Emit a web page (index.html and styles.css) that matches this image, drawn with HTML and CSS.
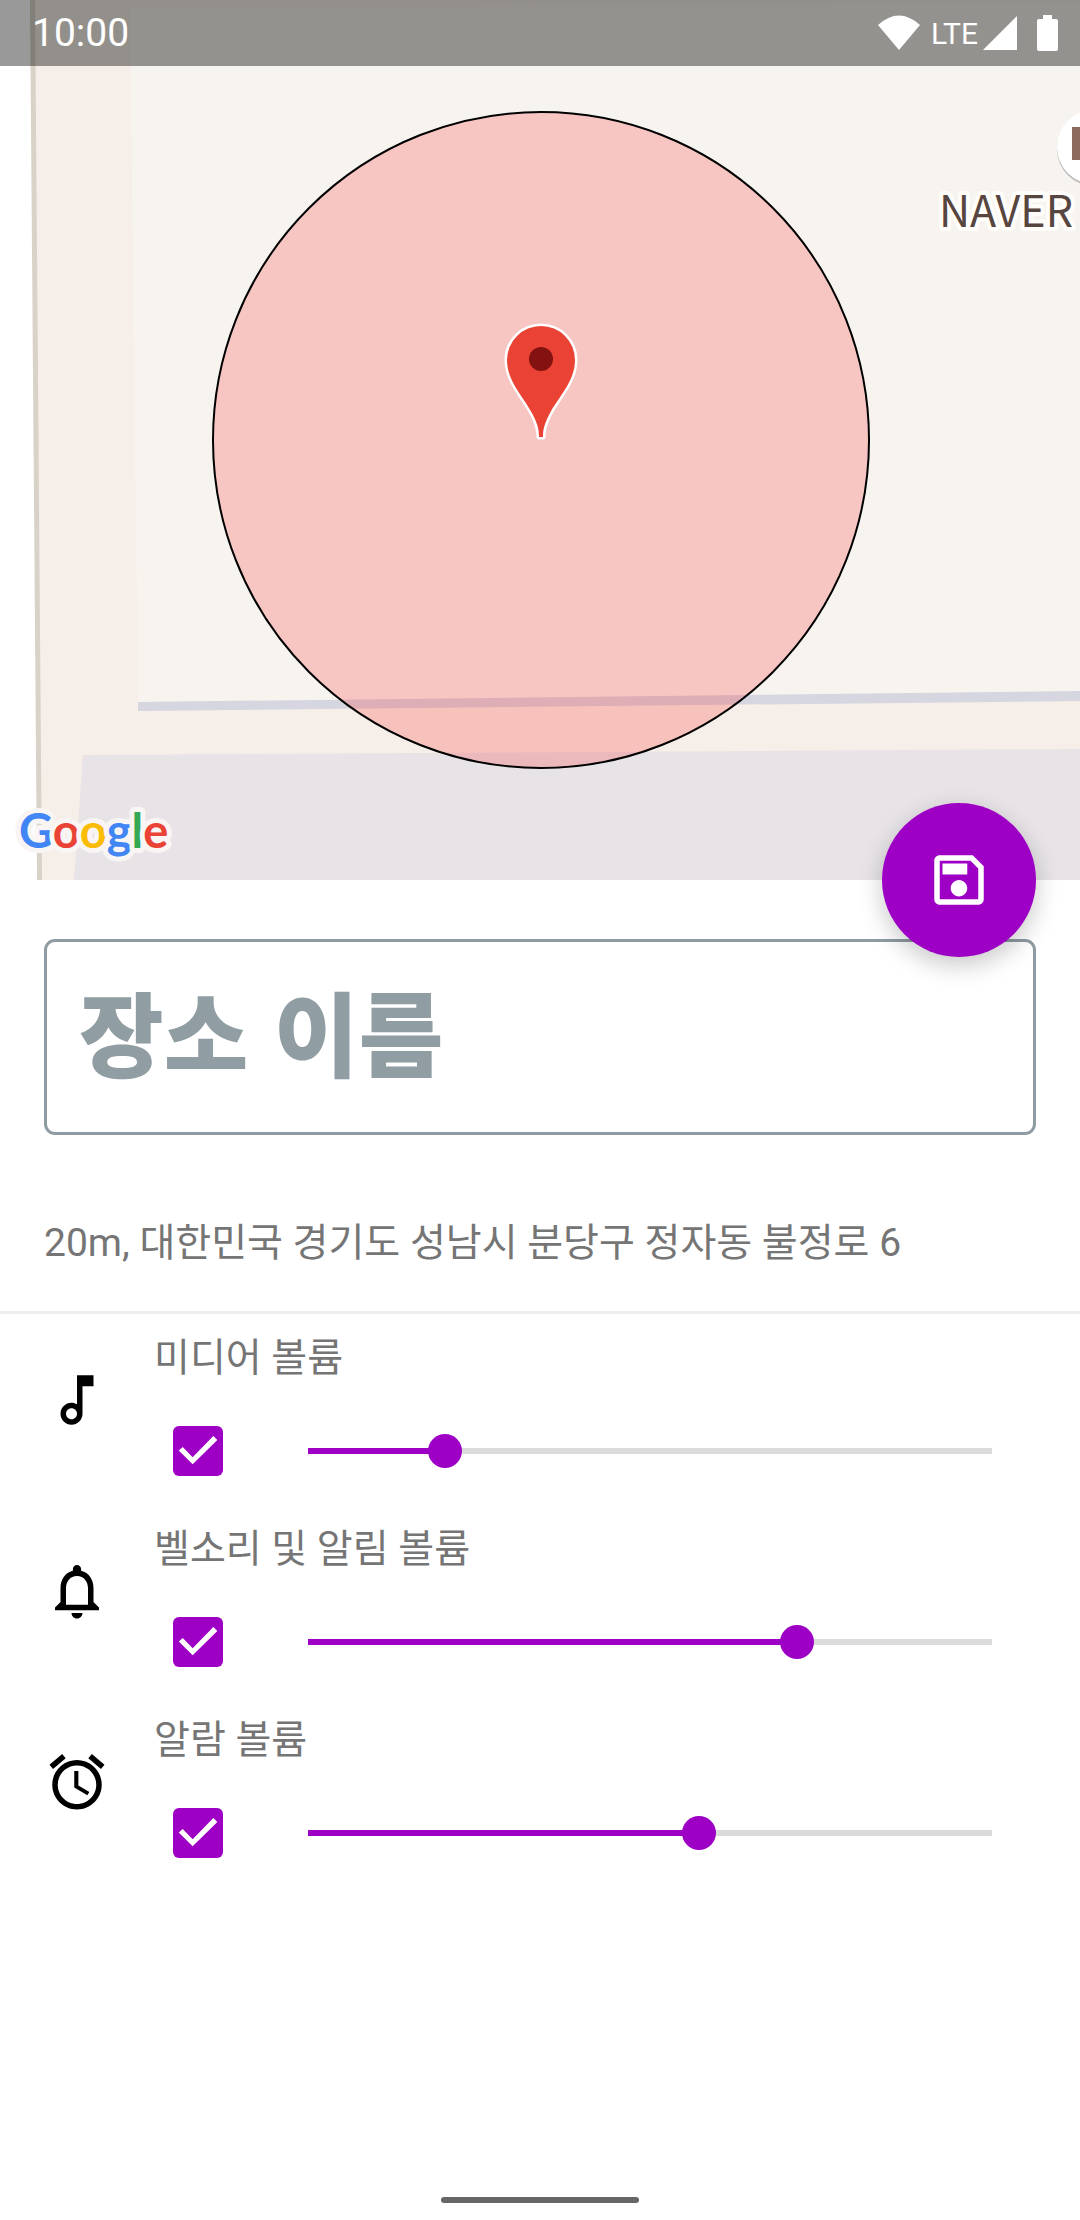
FILE: index.html
```html
<!DOCTYPE html>
<html lang="ko">
<head>
<meta charset="utf-8">
<meta name="viewport" content="width=device-width, initial-scale=1">
<title>장소 이름</title>
<link rel="stylesheet" href="styles.css">
</head>
<body>
<div class="screen">
  <header class="map">
    <svg class="map-canvas" viewBox="0 0 1080 880" preserveAspectRatio="xMidYMid slice" role="img" aria-label="지도">
      <rect width="1080" height="880" fill="#fff"/>
      <path d="M33 0H1080V880H40Z" fill="#f6eee8"/>
      <path d="M30 0H35L42 880H37Z" fill="#d9d2c8"/>
      <path d="M130 9L1080 3V692L138 702Z" fill="#f7f4ef"/>
      <path d="M138 702L1080 691V701L138 711Z" fill="#d5d6df"/>
      <path d="M83 755L1080 749V880H74Z" fill="#e7e3e6"/>
      <circle cx="1094" cy="149" r="37" fill="#b9b9b9"/>
      <circle cx="1094" cy="147" r="37" fill="#fff"/>
      <rect x="1072" y="127" width="20" height="33" fill="#8d6a5e"/>
      <text class="poi" x="939" y="227">NAVER</text>
      <circle cx="541" cy="440" r="328" fill="#ff1111" fill-opacity=".2" stroke="#000" stroke-width="2"/>
      <path d="M507 360a34 34 0 0 1 68 0C575 382 558 397 549 415C544 425 543 430 543 437H539C539 430 538 425 533 415C524 397 507 382 507 360Z" fill="#ea4335" stroke="#fff" stroke-width="5" stroke-linejoin="round" paint-order="stroke"/>
      <circle cx="541" cy="359" r="12" fill="#831210"/>
      <text class="brand" x="19" y="848"><tspan class="blue">G</tspan><tspan class="red">o</tspan><tspan class="yellow">o</tspan><tspan class="blue">g</tspan><tspan class="green">l</tspan><tspan class="red">e</tspan></text>
    </svg>
    <div class="status">
      <time class="clock">10:00</time>
      <svg class="wifi" viewBox="0 0 42 36"><path d="M0 10Q21 -9 42 10L21 35Z" fill="#fff"/></svg>
      <span class="network">LTE</span>
      <svg class="signal" viewBox="0 0 34 36"><path d="M34 1V35H0Z" fill="#fff"/></svg>
      <svg class="battery" viewBox="0 0 22 36"><path d="M6 0H15V4H19Q21 4 21 6V34Q21 36 19 36H2Q0 36 0 34V6Q0 4 2 4H6Z" fill="#fff"/></svg>
    </div>
    <button class="save" type="button" aria-label="저장">
      <svg class="icon" viewBox="0 0 24 24"><path fill="#fff" d="M17 3H5c-1.11 0-2 .9-2 2v14c0 1.1.89 2 2 2h14c1.1 0 2-.9 2-2V7l-4-4zm2 16H5V5h11.17L19 7.83V19zm-7-7c-1.66 0-3 1.34-3 3s1.34 3 3 3 3-1.34 3-3-1.34-3-3-3zM6 6h9v4H6V6z"/></svg>
    </button>
  </header>

  <main>
    <div class="place">
      <input class="name" type="text" placeholder="장소 이름" aria-label="장소 이름">
      <p class="address">20m, 대한민국 경기도 성남시 분당구 정자동 불정로 6</p>
    </div>

    <section class="volume">
      <svg class="icon" viewBox="0 0 24 24"><path d="M12 3l.01 10.55c-.59-.34-1.27-.55-2-.55C7.79 13 6 14.79 6 17s1.79 4 4.01 4S14 19.21 14 17V7h4V3h-6zm-1.99 16c-1.1 0-2-.9-2-2s.9-2 2-2 2 .9 2 2-.9 2-2 2z"/></svg>
      <div class="body">
        <label class="label" for="media">미디어 볼륨</label>
        <div class="controls">
          <input class="check" type="checkbox" checked aria-label="미디어 볼륨 사용">
          <input class="slider" id="media" type="range" min="0" max="15" value="3" style="--fill: 3 / 15">
        </div>
      </div>
    </section>

    <section class="volume">
      <svg class="icon" viewBox="0 0 24 24"><path d="M12 22c1.1 0 2-.9 2-2h-4c0 1.1.9 2 2 2zm6-6v-5c0-3.07-1.63-5.64-4.5-6.32V4c0-.83-.67-1.5-1.5-1.5s-1.5.67-1.5 1.5v.68C7.64 5.36 6 7.92 6 11v5l-2 2v1h16v-1l-2-2zm-2 1H8v-6c0-2.48 1.51-4.5 4-4.5s4 2.02 4 4.5v6z"/></svg>
      <div class="body">
        <label class="label" for="ring">벨소리 및 알림 볼륨</label>
        <div class="controls">
          <input class="check" type="checkbox" checked aria-label="벨소리 및 알림 볼륨 사용">
          <input class="slider" id="ring" type="range" min="0" max="7" value="5" style="--fill: 5 / 7">
        </div>
      </div>
    </section>

    <section class="volume">
      <svg class="icon" viewBox="0 0 24 24"><path d="M22 5.72l-4.6-3.86-1.29 1.53 4.6 3.86L22 5.72zM7.88 3.39L6.6 1.86 2 5.71l1.29 1.53 4.59-3.85zM12.5 8H11v6l4.75 2.85.75-1.23-4-2.37V8zM12 4c-4.97 0-9 4.03-9 9s4.02 9 9 9c4.97 0 9-4.03 9-9s-4.03-9-9-9zm0 16c-3.87 0-7-3.13-7-7s3.13-7 7-7 7 3.13 7 7-3.13 7-7 7z"/></svg>
      <div class="body">
        <label class="label" for="alarm">알람 볼륨</label>
        <div class="controls">
          <input class="check" type="checkbox" checked aria-label="알람 볼륨 사용">
          <input class="slider" id="alarm" type="range" min="0" max="7" value="4" style="--fill: 4 / 7">
        </div>
      </div>
    </section>
  </main>

  <footer class="nav"><div class="handle"></div></footer>
</div>
</body>
</html>
```
FILE: styles.css
```css
:root {
  --accent: #9d00c4;
  --text: #757575;
}

* {
  box-sizing: border-box;
}

body {
  margin: 0;
  background: #fff;
  color: var(--text);
  font-family: Roboto, "Noto Sans CJK KR", sans-serif;
}

.screen {
  display: flex;
  flex-direction: column;
  min-height: 100vh;
}

.icon {
  width: 66px;
  height: 66px;
}

/* Map */
.map {
  position: relative;
}

.map-canvas {
  display: block;
  width: 100%;
  aspect-ratio: 27 / 22;
}

.poi {
  font: 400 43px "Noto Sans CJK KR", sans-serif;
  fill: #57453f;
  stroke: #fffdfa;
  stroke-width: 8px;
  stroke-linejoin: round;
  paint-order: stroke;
}

.brand {
  font: 700 47px Lato, sans-serif;
  stroke: #f8f5f4;
  stroke-width: 10px;
  stroke-linejoin: round;
  paint-order: stroke;
}

.blue { fill: #4285f4; }
.red { fill: #ea4335; }
.yellow { fill: #fbbc05; }
.green { fill: #34a853; }

.status {
  position: absolute;
  top: 0;
  left: 0;
  right: 0;
  display: flex;
  align-items: center;
  height: 66px;
  padding: 0 21px 0 32px;
  background: rgba(0, 0, 0, .4);
  color: #fff;
}

.status svg {
  height: 36px;
}

.clock {
  margin-right: auto;
  font-size: 39px;
}

.wifi { width: 42px; }

.network {
  margin: 0 5px 0 11px;
  font-size: 30px;
}

.signal { width: 34px; }

.battery {
  width: 22px;
  margin-left: 20px;
}

.save {
  position: absolute;
  right: 44px;
  bottom: -77px;
  display: grid;
  place-items: center;
  width: 154px;
  height: 154px;
  padding: 0;
  border: 0;
  border-radius: 50%;
  background: var(--accent);
  box-shadow: 0 8px 24px rgba(0, 0, 0, .22);
}

/* Place */
.place {
  padding: 59px 44px 28px;
  border-bottom: 3px solid #eee;
}

.name {
  display: block;
  width: 100%;
  height: 196px;
  padding: 0 32px 16px;
  border: 3px solid #8e9ba2;
  border-radius: 11px;
  background: none;
  color: #222;
  font: 900 92px "Noto Sans CJK KR", sans-serif;
}

.name::placeholder {
  color: #909da3;
  opacity: 1;
}

.address {
  margin: 82px 0 14px;
  font-size: 39px;
  line-height: 52px;
}

/* Volume rows */
.volume {
  display: flex;
  padding: 18px 54px 10px 44px;
}

.volume > .icon {
  flex: none;
  margin: 35px 44px 0 0;
}

.body {
  flex: 1;
}

.label {
  display: block;
  font-size: 39px;
  line-height: 52px;
}

.controls {
  display: flex;
  align-items: center;
  height: 88px;
  margin-top: 23px;
  padding: 0 17px 0 19px;
}

.check {
  appearance: none;
  flex: none;
  width: 50px;
  height: 50px;
  margin: 0 68px 0 0;
  border: 3px solid var(--text);
  border-radius: 6px;
}

.check:checked {
  border: 0;
  background: var(--accent);
}

.check:checked::after {
  content: "";
  display: block;
  height: 100%;
  background: #fff;
  clip-path: polygon(11.5% 49%, 19.5% 42%, 39.3% 62.5%, 80.7% 20%, 88.7% 28%, 39.3% 76.7%);
}

.slider {
  appearance: none;
  flex: 1;
  min-width: 0;
  height: 34px;
  margin: 0;
  background:
    linear-gradient(var(--accent), var(--accent)) 17px 50% / calc((100% - 34px) * (var(--fill))) 6px no-repeat,
    linear-gradient(#dbdbdb, #dbdbdb) 50% 50% / calc(100% - 34px) 6px no-repeat;
}

.slider::-webkit-slider-thumb {
  appearance: none;
  width: 34px;
  height: 34px;
  border-radius: 50%;
  background: var(--accent);
}

/* Gesture bar */
.nav {
  display: flex;
  justify-content: center;
  margin-top: auto;
  padding-bottom: 17px;
}

.handle {
  width: 198px;
  height: 6px;
  border-radius: 3px;
  background: #666;
}
```
